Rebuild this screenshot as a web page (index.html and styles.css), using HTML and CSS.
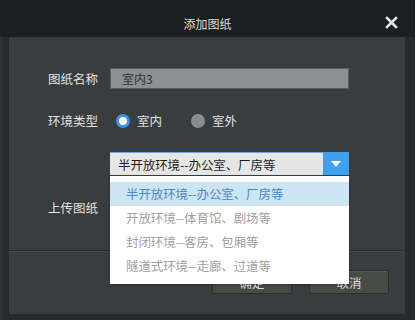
FILE: index.html
```html
<!DOCTYPE html>
<html lang="zh">

<head>
    <meta charset="UTF-8">
    <meta name="viewport" content="width=device-width, initial-scale=1.0">
    <title>添加图纸</title>
    <link rel="stylesheet" href="styles.css">
</head>

<body>

    <div class="dialog">
        <div class="header">
            <span class="title">添加图纸</span>
            <span class="close">
                <svg width="13" height="13" viewBox="0 0 13 13">
                    <path d="M2 2 L11 11 M11 2 L2 11" stroke="#e4e4e4" stroke-width="2.6" stroke-linecap="square" fill="none"/>
                </svg>
            </span>
        </div>

        <div class="panel">
            <div class="content">
                <div class="row">
                    <label class="label">图纸名称</label>
                    <div class="input">室内3</div>
                </div>

                <div class="row">
                    <label class="label">环境类型</label>
                    <div class="radios">
                        <span class="radio checked"></span>
                        <span class="radio-text">室内</span>
                        <span class="radio"></span>
                        <span class="radio-text">室外</span>
                    </div>
                </div>

                <div class="row">
                    <span class="label"></span>
                    <div class="select-wrap">
                        <div class="select">
                            <span class="select-text">半开放环境--办公室、厂房等</span>
                            <span class="arrow"></span>
                        </div>
                        <ul class="options">
                            <li class="active">半开放环境--办公室、厂房等</li>
                            <li>开放环境--体育馆、剧场等</li>
                            <li>封闭环境--客房、包厢等</li>
                            <li>隧道式环境--走廊、过道等</li>
                        </ul>
                    </div>
                </div>

                <div class="row upload">
                    <label class="label">上传图纸</label>
                </div>
            </div>

            <div class="footer">
                <button class="btn">确定</button>
                <button class="btn">取消</button>
            </div>
        </div>
    </div>

</body>

</html>
```

FILE: styles.css
```css
body {
    margin: 0;
    background: #fff;
    font-family: "Noto Sans CJK SC", "Noto Sans", sans-serif;
}

.dialog {
    width: 415px;
    height: 320px;
    background: #27292c;
    border-left: 3px solid #2e3134;
    box-sizing: border-box;
    display: flex;
    flex-direction: column;
}

.header {
    height: 37px;
    margin-left: -3px;
    background: #1c1f22;
    display: flex;
    align-items: center;
    justify-content: center;
    position: relative;
    padding-top: 10px;
    box-sizing: border-box;
}

.title {
    color: #dcdcdc;
    font-size: 12px;
}

.close {
    position: absolute;
    right: 17px;
    top: 16px;
    display: flex;
}

.panel {
    margin: 0 10px 6px 6px;
    flex: 1;
    background: #3a3d40;
    display: flex;
    flex-direction: column;
}

.content {
    height: 214px;
    padding: 31px 0 0 39px;
    box-sizing: border-box;
    display: flex;
    flex-direction: column;
    gap: 21px;
    border-bottom: 1px solid #2a2c2f;
}

.row {
    display: flex;
    align-items: center;
    gap: 12px;
    min-height: 21px;
}

.label {
    width: 50px;
    color: #e2e2e2;
    font-size: 12.5px;
    white-space: nowrap;
}

.input {
    height: 19px;
    background: #8d8f91;
    border: 1px solid #5b5d60;
    color: #2d3033;
    font-size: 12px;
    line-height: 19px;
    padding-left: 11px;
    width: 226px;
}

.radios {
    display: flex;
    align-items: center;
}

.radio {
    width: 14px;
    height: 14px;
    border-radius: 50%;
    background: #8b8c8d;
    box-sizing: border-box;
    margin-left: 5px;
}

.radio.checked {
    background: #fff;
    border: 3.5px solid #3c8fe8;
    margin-left: 6px;
}

.radio-text {
    color: #e2e2e2;
    font-size: 12.5px;
    margin-left: 7px;
    margin-right: 24px;
}

.select-wrap {
    position: relative;
    width: 239px;
}

.select {
    height: 23px;
    background: #e6e6e6;
    border-top: 1px solid #6aa8e0;
    box-sizing: border-box;
    display: flex;
    align-items: center;
    justify-content: space-between;
}

.select-text {
    color: #1e1e1e;
    font-size: 12.5px;
    padding-left: 8px;
    letter-spacing: -0.1px;
}

.arrow {
    width: 26px;
    height: 23px;
    margin-top: -1px;
    background: #3ea0ee;
    display: flex;
    align-items: center;
    justify-content: center;
}

.arrow::after {
    content: "";
    border-left: 5px solid transparent;
    border-right: 5px solid transparent;
    border-top: 6px solid #fff;
    margin-top: 1px;
}

.options {
    position: absolute;
    top: 24px;
    left: 0;
    width: 239px;
    margin: 0;
    padding: 6px 0;
    list-style: none;
    background: #fff;
    box-shadow: 0 1px 3px rgba(0, 0, 0, 0.3);
    z-index: 2;
}

.options li {
    height: 24px;
    line-height: 24px;
    padding-left: 16px;
    font-size: 12.5px;
    color: #a0a0a0;
    letter-spacing: -0.1px;
}

.options li.active {
    background: #cde4f3;
    color: #4c88c2;
}

.upload {
    margin-top: 1px;
}

.footer {
    flex: 1;
    border-top: 1px solid #46494c;
    display: flex;
    justify-content: flex-end;
    align-items: flex-start;
    gap: 17px;
    padding: 18px 16px 0 0;
}

.btn {
    width: 80px;
    height: 24px;
    background: #474a45;
    border: 1px solid #2c2e2b;
    border-radius: 2px;
    color: #dedede;
    font-family: "Noto Sans CJK SC", sans-serif;
    font-size: 12.5px;
    padding: 0;
    box-shadow: inset 0 1px 0 #55584f;
}
```
